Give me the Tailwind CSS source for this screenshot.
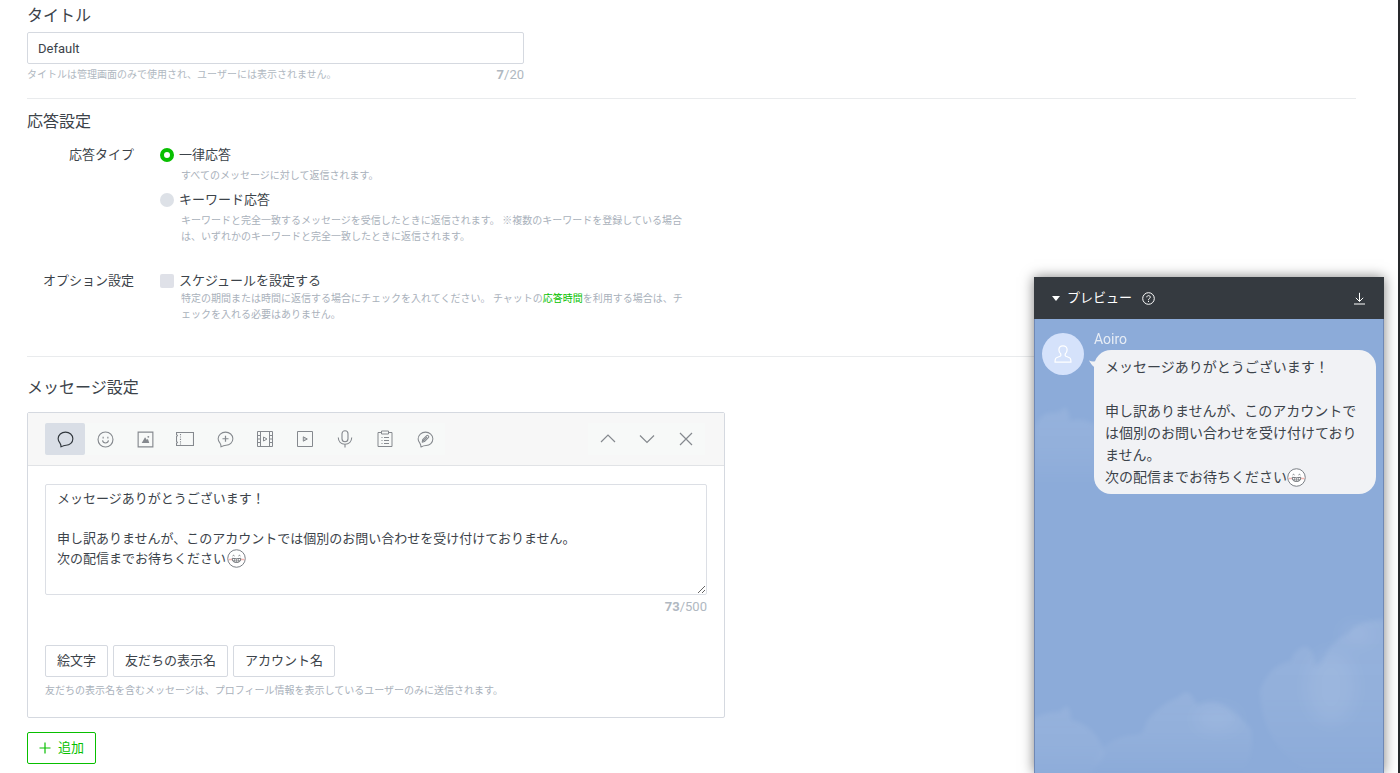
<!doctype html>
<html lang="ja">
    <head>
        <meta charset="UTF-8" />
        <meta name="viewport" content="width=device-width, initial-scale=1.0" />
        <title>応答メッセージ</title>
        <script src="https://cdn.jsdelivr.net/npm/@tailwindcss/browser@4"></script>
        <style>
            body {
                font-family: Roboto, "Noto Sans CJK JP", sans-serif;
            }
        </style>
    </head>
    <body class="bg-white text-[13px] leading-5 text-[#3c434a]">
        <!-- Shared emoji -->
        <svg class="hidden">
            <symbol id="grin" viewBox="0 0 18 18">
                <circle cx="9" cy="9" r="8.3" fill="#fff" stroke="#74797f" stroke-width="0.9" />
                <path d="M1.6 10h3M13.400 10h3" stroke="#f5b5b0" stroke-width="1.400" />
                <path d="M5.300 6.600q.9-1.200 1.800 0M10.900 6.600q.9-1.200 1.800 0" fill="none" stroke="#5d6166" stroke-width="0.8" />
                <path d="M5 8.800q4 1 8 0 .3 4-4 4t-4-4z" fill="#fff" stroke="#5d6166" stroke-width="0.8" />
                <path d="M5.400 10.900q3.600.8 7.200 0M7.200 9.200v3.100M9 9.300v3.400M10.800 9.200v3.100" fill="none" stroke="#5d6166" stroke-width="0.500" />
            </symbol>
        </svg>

        <main class="min-h-screen border-r-2 border-[#26282b] pt-1 pr-[42px] pb-2 pl-[27px]">
            <section>
                <h2 class="text-base leading-6"><label for="title">タイトル</label></h2>
                <div class="mt-1 max-w-[497px]">
                    <input
                        id="title"
                        type="text"
                        value="Default"
                        class="block h-8 w-full rounded-xs border border-[#d5d9e0] px-[10px] text-[13px] outline-none focus:border-[#08bf00]"
                    />
                    <div class="mt-[3px] flex justify-between leading-4 text-[#b0b8c1]">
                        <p class="text-[10px]">タイトルは管理画面のみで使用され、ユーザーには表示されません。</p>
                        <p><b>7</b>/20</p>
                    </div>
                </div>
            </section>

            <hr class="mt-[15px] border-[#e9ebed]" />

            <section class="mt-[11px]">
                <h2 class="text-base leading-6">応答設定</h2>
                <fieldset class="mt-[11px] flex">
                    <legend class="float-left mr-[26px] w-[107px] text-right">応答タイプ</legend>
                    <div class="max-w-[548px] flex-1">
                        <label class="flex items-center gap-[5px]">
                            <input type="radio" name="type" checked class="size-[14px] appearance-none rounded-full bg-[#dde1e7] checked:border-4 checked:border-[#08bf00] checked:bg-white" />
                            一律応答
                        </label>
                        <p class="mt-[3px] pl-[21px] text-[10px] leading-4 text-[#a9b1bb]">すべてのメッセージに対して返信されます。</p>
                        <label class="mt-[6px] flex items-center gap-[5px]">
                            <input type="radio" name="type" class="size-[14px] appearance-none rounded-full bg-[#dde1e7] checked:border-4 checked:border-[#08bf00] checked:bg-white" />
                            キーワード応答
                        </label>
                        <p class="mt-[3px] pl-[21px] text-[10px] leading-4 text-[#a9b1bb]">
                            キーワードと完全一致するメッセージを受信したときに返信されます。 ※複数のキーワードを登録している場合<br />は、いずれかのキーワードと完全一致したときに返信されます。
                        </p>
                    </div>
                </fieldset>
                <fieldset class="mt-[26px] flex">
                    <legend class="float-left mr-[26px] w-[107px] text-right">オプション設定</legend>
                    <div class="max-w-[548px] flex-1">
                        <label class="flex items-center gap-[5px]">
                            <input type="checkbox" class="size-[14px] appearance-none rounded-xs bg-[#dfe1e8] checked:bg-[#08bf00]" />
                            スケジュールを設定する
                        </label>
                        <p class="pl-[21px] text-[10px] leading-4 text-[#a9b1bb]">
                            特定の期間または時間に返信する場合にチェックを入れてください。 チャットの<a href="#" class="text-[#08bf00]">応答時間</a>を利用する場合は、チ<br />ェックを入れる必要はありません。
                        </p>
                    </div>
                </fieldset>
            </section>

            <hr class="mt-[33px] border-[#e9ebed]" />

            <section class="mt-[19px]">
                <h2 class="text-base leading-6">メッセージ設定</h2>
                <div class="mt-3 max-w-[698px] rounded-xs border border-[#d5d9e0]">
                    <div class="flex items-center justify-between border-b border-[#e1e3e6] bg-[#f7f7f7] px-[17px] py-[10px] text-[#85898e]">
                        <div class="flex bg-[#f7f9f8]">
                            <button aria-label="テキスト" class="flex h-8 w-10 items-center justify-center rounded-xs bg-[#d9dee6] text-[#30363c]">
                                <svg class="size-[17px]" viewBox="0 0 18 18" fill="none" stroke="currentColor" stroke-width="1.200" stroke-linejoin="round"><path d="M4.200 16.800C4.300 15.200 3.900 13.800 3 12.500 1.900 11.200 1.200 9.700 1.200 8.200 1.200 4.200 4.700 1.200 9 1.200s7.800 3 7.800 6.900-3.300 7-7.200 7c-1.900 0-3.400.5-5.400 1.700z" /></svg>
                            </button>
                            <button aria-label="スタンプ" class="flex h-8 w-10 items-center justify-center">
                                <svg class="size-[17px]" viewBox="0 0 18 18" fill="none" stroke="currentColor" stroke-width="1.200"><circle cx="9" cy="9" r="7.900" /><path d="M6.500 6v2M11.500 6v2M5.800 10c.3 1.700 1.500 2.700 3.200 2.700s2.900-1 3.200-2.700" /></svg>
                            </button>
                            <button aria-label="写真" class="flex h-8 w-10 items-center justify-center">
                                <svg class="size-[17px]" viewBox="0 0 18 18" fill="none" stroke="currentColor" stroke-width="1.200"><path d="M1.200 1.200h15.600v15.600h-15.600z" /><path d="M5 12.700l3.500-6.200 2 3 1-1.200 1.500 4.400z" fill="currentColor" stroke="none" /><circle cx="12" cy="6.200" r="1" fill="currentColor" stroke="none" /></svg>
                            </button>
                            <button aria-label="クーポン" class="flex h-8 w-10 items-center justify-center">
                                <svg class="size-[18px]" viewBox="0 0 18 18" fill="none" stroke="currentColor" stroke-width="1.100"><path d="M.500 2.500h17v13H.500v-2.200l.9-.9-.9-.9V6.500l.9-.9-.9-.9z" /><path d="M4.500 4v10.500" stroke-dasharray="1.200 1.200" /></svg>
                            </button>
                            <button aria-label="リッチメッセージ" class="flex h-8 w-10 items-center justify-center">
                                <svg class="size-[17px]" viewBox="0 0 18 18" fill="none" stroke="currentColor" stroke-width="1.100" stroke-linejoin="round"><path d="M4.200 16.800C4.300 15.200 3.900 13.800 3 12.500 1.900 11.200 1.200 9.700 1.200 8.200 1.200 4.200 4.700 1.200 9 1.200s7.800 3 7.800 6.900-3.300 7-7.200 7c-1.900 0-3.400.5-5.400 1.700z" /><path d="M9 5v6.400M5.800 8.200h6.400" stroke-width="1.300" /></svg>
                            </button>
                            <button aria-label="リッチビデオメッセージ" class="flex h-8 w-10 items-center justify-center">
                                <svg class="size-[18px]" viewBox="0 0 18 18" fill="none" stroke="currentColor"><path d="M1.500 1.500h15v15h-15zM4.500 1.500v15M13.500 1.500v15M1.500 5.500h3M1.500 9h3M1.500 12.500h3M13.500 5.500h3M13.500 9h3M13.500 12.500h3M7.500 7v4l3.500-2z" /></svg>
                            </button>
                            <button aria-label="動画" class="flex h-8 w-10 items-center justify-center">
                                <svg class="size-[18px]" viewBox="0 0 18 18" fill="none" stroke="currentColor"><path d="M1.500 1.500h15v15h-15z" /><path d="M7.300 6.800v4.400L11.300 9z" fill="currentColor" fill-opacity=".4" /></svg>
                            </button>
                            <button aria-label="ボイスメッセージ" class="flex h-8 w-10 items-center justify-center">
                                <svg class="size-[18px]" viewBox="0 0 18 18" fill="none" stroke="currentColor" stroke-width="1.100"><rect x="6" y=".700" width="6" height="11" rx="3" /><path d="M2.300 7.500c0 4 2.700 6.700 6.700 6.700s6.700-2.700 6.700-6.700M9 14.200v3.300" /></svg>
                            </button>
                            <button aria-label="リサーチ" class="flex h-8 w-10 items-center justify-center">
                                <svg class="size-[18px]" viewBox="0 0 18 18" fill="none" stroke="currentColor"><path d="M5.500 2.500h-3.500v14h14v-14h-3.500M5.500 1h7v3h-7zM5.500 7.500h1M8 7.500h5M5.500 10.500h1M8 10.500h5M5.500 13.500h1M8 13.500h5" /></svg>
                            </button>
                            <button aria-label="カードタイプメッセージ" class="flex h-8 w-10 items-center justify-center">
                                <svg class="size-[17px]" viewBox="0 0 18 18" fill="none" stroke="currentColor" stroke-width="1.100" stroke-linejoin="round"><path d="M4.200 16.900C4.200 15.200 3.800 14 3 12.800 1.900 11.500 1.200 10 1.200 8.500 1.200 4.300 4.700 1.200 9 1.200s7.800 3 7.800 7-3.300 7.100-7.200 7.100c-1.900 0-3.400.5-5.400 1.600z" /><path d="M5.500 11.800l.5-2.700 4.300-4.300c1-.8 2.900 1 2 2l-4.400 4.400zM6 9.100l1.900 2.100M7 10.200l3.600-3.600" /></svg>
                            </button>
                        </div>
                        <div class="mr-[2px] flex bg-[#f7f9f8]">
                            <button aria-label="上へ" class="flex h-8 w-[39px] items-center justify-center">
                                <svg class="size-[18px]" viewBox="0 0 18 18" fill="none" stroke="currentColor" stroke-width="1.200"><path d="M2 12l7-7 7 7" /></svg>
                            </button>
                            <button aria-label="下へ" class="flex h-8 w-[39px] items-center justify-center">
                                <svg class="size-[18px]" viewBox="0 0 18 18" fill="none" stroke="currentColor" stroke-width="1.200"><path d="M2 5.500l7 7 7-7" /></svg>
                            </button>
                            <button aria-label="削除" class="flex h-8 w-[39px] items-center justify-center">
                                <svg class="size-[18px]" viewBox="0 0 18 18" fill="none" stroke="currentColor" stroke-width="1.200"><path d="M3 3l12 12M15 3L3 15" /></svg>
                            </button>
                        </div>
                    </div>
                    <div class="px-[17px] py-[18px]">
                        <div class="relative">
                            <textarea
                                aria-label="メッセージ"
                                class="block h-[111px] w-full resize-y rounded-xs border border-[#dcdfe5] px-[11px] py-1 text-[13px] leading-5 outline-none focus:border-[#08bf00]"
                            >
メッセージありがとうございます！

申し訳ありませんが、このアカウントでは個別のお問い合わせを受け付けておりません。
次の配信までお待ちください</textarea
                            >
                            <!-- sits right after the last character -->
                            <svg class="pointer-events-none absolute top-[65px] left-[182px] size-[19px]"><use href="#grin" /></svg>
                        </div>
                        <p class="mt-1 text-right leading-4 text-[#b0b8c1]"><b>73</b>/500</p>
                        <div class="mt-[30px] flex gap-[5px]">
                            <button class="h-8 rounded-xs border border-[#d5d9e0] bg-white px-[11px]">絵文字</button>
                            <button class="h-8 rounded-xs border border-[#d5d9e0] bg-white px-[11px]">友だちの表示名</button>
                            <button class="h-8 rounded-xs border border-[#d5d9e0] bg-white px-[11px]">アカウント名</button>
                        </div>
                        <p class="mt-[6px] text-[10px] leading-4 text-[#a9b1bb]">
                            友だちの表示名を含むメッセージは、プロフィール情報を表示しているユーザーのみに送信されます。
                        </p>
                    </div>
                </div>
                <button class="mt-[14px] flex h-8 items-center gap-[7px] rounded-xs border border-[#08bf00] bg-white px-[11px] text-[#08bf00]">
                    <svg class="size-3" viewBox="0 0 12 12" stroke="currentColor" stroke-width="1.200"><path d="M6 .500v11M.500 6h11" /></svg>
                    追加
                </button>
            </section>
        </main>

        <!-- Floating preview -->
        <aside class="fixed top-[277px] right-4 bottom-0 flex w-[350px] flex-col border-x border-[#6f88b5] bg-[#8cabd9] shadow-[0_0_12px_rgba(0,0,0,0.5)]">
            <header class="-mx-px flex h-[42px] items-center justify-between bg-[#353a40] px-[18px] text-white">
                <div class="flex items-center">
                    <button class="flex items-center gap-[7px]">
                        <svg class="h-[5px] w-2" viewBox="0 0 8 5" fill="currentColor"><path d="M0 0h8L4 5z" /></svg>
                        プレビュー
                    </button>
                    <button aria-label="ヘルプ" class="ml-[10px]">
                        <svg class="size-[13px]" viewBox="0 0 13 13" fill="none" stroke="currentColor"><circle cx="6.500" cy="6.500" r="5.800" /><path d="M4.800 5.300c0-2.300 3.500-2.200 3.500-.1 0 1.300-1.800 1.300-1.800 2.600M6.500 8.800v1.200" /></svg>
                    </button>
                </div>
                <button aria-label="ダウンロード">
                    <svg class="size-[13px]" viewBox="0 0 13 13" fill="none" stroke="currentColor"><path d="M6.500.800v8.500M2.800 5.800l3.700 3.700 3.700-3.700M1 12h11" /></svg>
                </button>
            </header>
            <div class="relative flex flex-1 items-start overflow-hidden px-[7px] pt-[10px]">
                <!-- Sky with clouds that fade out towards their base -->
                <svg class="absolute inset-0 size-full" viewBox="0 0 348 454" preserveAspectRatio="none">
                    <defs>
                        <filter id="soft" x="-20%" y="-20%" width="140%" height="140%"><feGaussianBlur stdDeviation="2" /></filter>
                        <filter id="softer" x="-40%" y="-40%" width="180%" height="180%"><feGaussianBlur stdDeviation="8" /></filter>
                        <linearGradient id="fade" x1="0" y1="0" x2="0" y2="1">
                            <stop offset="0" stop-color="#fff" stop-opacity=".08" />
                            <stop offset="0.500" stop-color="#fff" stop-opacity=".06" />
                            <stop offset="1" stop-color="#fff" stop-opacity="0" />
                        </linearGradient>
                    </defs>
                    <g fill="url(#fade)" filter="url(#soft)">
                        <path d="M0 108q6-14 16-14t14-6q6 8 4 14 14-4 26 4v62H0z" />
                        <path d="M360 300q-38 0-46 14-18 8-24 24-6 10-10 8-2-20-12-18-10 4-12 14-22 4-31 30 2 40 24 62 20 24 50 24h61z" />
                        <path d="M-10 405q16-12 34-12l8-6q4 4 4 14 20 4 30 24 6 10 0 16l-20 24h-56z" />
                        <path d="M56 454q8-36 44-38 8 2 12-14 12-16 32-24 4-6 10-4 4 4 8 12 14-6 26 0 16 10 28 24 4 30-10 44z" />
                    </g>
                    <g fill="#fff" fill-opacity=".07" filter="url(#softer)">
                        <ellipse cx="296" cy="368" rx="24" ry="36" />
                        <ellipse cx="322" cy="315" rx="16" ry="10" />
                        <ellipse cx="182" cy="400" rx="22" ry="12" />
                    </g>
                </svg>
                <div class="relative mt-1 mr-[10px] flex size-[42px] shrink-0 items-center justify-center rounded-full bg-[#d5e2fb]">
                    <svg class="size-[18px]" viewBox="0 0 18 18" fill="none" stroke="#fff" stroke-width="1.200" stroke-linejoin="round"><path d="M9 .800C6.400.800 4.900 2.400 4.900 4.800c0 1.700.7 3.200 1.900 4.200v1.700c0 .7-4.300 1.400-5 2.600-.6 1-.8 2.300-.8 3.900h16c0-1.600-.2-2.900-.8-3.900-.7-1.200-5-1.900-5-2.600V9c1.200-1 1.900-2.500 1.900-4.200C13.100 2.400 11.600.800 9 .800z" /></svg>
                </div>
                <div class="relative min-w-0 flex-1">
                    <p class="text-sm leading-5 text-[#e6ecf5]">Aoiro</p>
                    <div class="relative mt-px rounded-[17px] bg-[#f1f2f5] px-[11px] py-[6px]">
                        <svg class="absolute top-[10px] -left-[5px] h-[9px] w-[9px]" viewBox="0 0 9 9" fill="#f1f2f5"><path d="M0 .500q4 2 9 0v8.500q-5-1-9-8.500z" /></svg>
                        <p class="text-sm leading-[22px]">
                            メッセージありがとうございます！<br /><br />申し訳ありませんが、このアカウントでは個別のお問い合わせを受け付けておりません。<br />次の配信までお待ちください<svg class="inline size-[19px] align-[-5px]"><use href="#grin" /></svg>
                        </p>
                    </div>
                </div>
            </div>
        </aside>
    </body>
</html>
